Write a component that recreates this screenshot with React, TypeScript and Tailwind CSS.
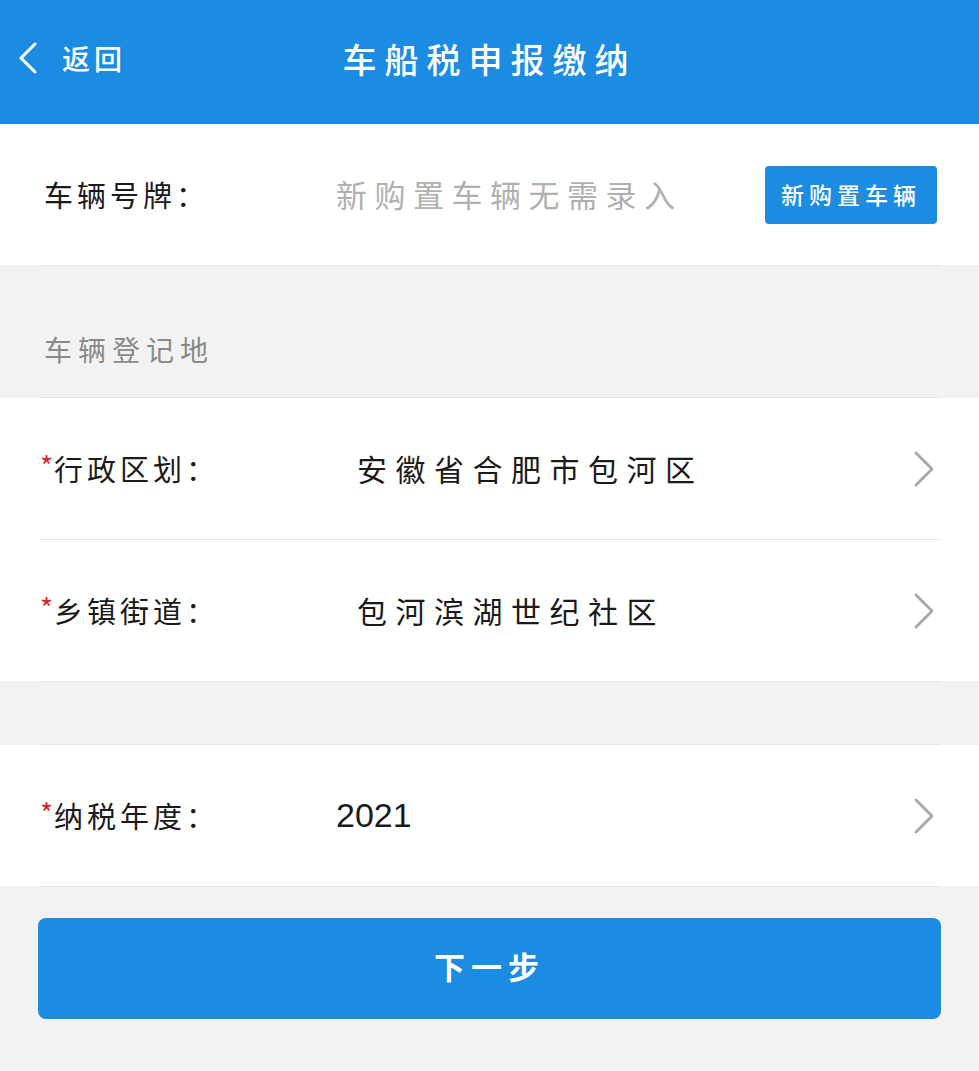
import { ChevronLeft, ChevronRight } from 'lucide-react';

const cjk = "font-['Noto_Sans_CJK_SC','Noto_Sans',sans-serif]";

function Divider() {
  return <div className="mx-[40px] h-px bg-[#e4e4e4]" />;
}

function SelectRow({ label, value, valueX, latin }: { label: string; value: string; valueX: string; latin?: boolean }) {
  return (
    <div className="flex h-[141px] items-center pl-[40px] pr-[23px]">
      <div className={`flex items-center ${valueX}`}>
        <span className="mb-[8px] mr-[1px] text-[28px] leading-none text-[#d8262b]">*</span>
        <span className="text-[29px] tracking-[4px] text-[#1a1a1a]">{label}</span>
      </div>
      {latin ? (
        <span className="flex-1 font-['Liberation_Sans',sans-serif] text-[34px] text-[#1a1a1a]">{value}</span>
      ) : (
        <span className="flex-1 text-[30px] tracking-[8.5px] text-[#1a1a1a]">{value}</span>
      )}
      <ChevronRight size={64} strokeWidth={1.1} className="text-[#a9a9a9]" />
    </div>
  );
}

export default function App() {
  return (
    <div className={`h-[1071px] w-[979px] overflow-hidden bg-[#f2f2f2] ${cjk}`}>
      {/* Header */}
      <div className="flex h-[124px] items-center bg-[#1b8ce1] pb-[8px] text-white">
        <div className="flex w-[200px] items-center">
          <ChevronLeft size={56} strokeWidth={1.3} />
          <span className="ml-[6px] text-[28px] font-medium tracking-[4px]">返回</span>
        </div>
        <div className="flex-1 text-center text-[34px] font-medium tracking-[8px]">车船税申报缴纳</div>
        <div className="w-[200px]" />
      </div>

      {/* Plate */}
      <div className="flex h-[141px] items-center bg-white pl-[44px] pr-[42px]">
        <span className="w-[292px] text-[29px] tracking-[4px] text-[#1a1a1a]">车辆号牌：</span>
        <span className="flex-1 text-[31px] tracking-[7.5px] text-[#b0b0b0]">新购置车辆无需录入</span>
        <button className="h-[58px] w-[172px] rounded-[4px] bg-[#1b8ce1] text-[23px] font-medium tracking-[5px] text-white">
          新购置车辆
        </button>
      </div>
      <Divider />

      {/* Section title */}
      <div className="h-[131px] pl-[44px] pt-[66px]">
        <span className="text-[28px] leading-[34px] tracking-[6px] text-[#8a8a8a]">车辆登记地</span>
      </div>
      <Divider />

      <div className="bg-white">
        <SelectRow label="行政区划：" value="安徽省合肥市包河区" valueX="w-[317px]" />
        <Divider />
        <SelectRow label="乡镇街道：" value="包河滨湖世纪社区" valueX="w-[317px]" />
      </div>
      <Divider />
      <div className="h-[62px]" />
      <Divider />

      <div className="bg-white">
        <SelectRow label="纳税年度：" value="2021" valueX="w-[296px]" latin />
      </div>
      <Divider />

      <div className="px-[38px] pt-[31px]">
        <button className="h-[101px] w-full rounded-[8px] bg-[#1b8ce1] pb-[4px] text-[31px] font-bold tracking-[6px] text-white">
          下一步
        </button>
      </div>
    </div>
  );
}
